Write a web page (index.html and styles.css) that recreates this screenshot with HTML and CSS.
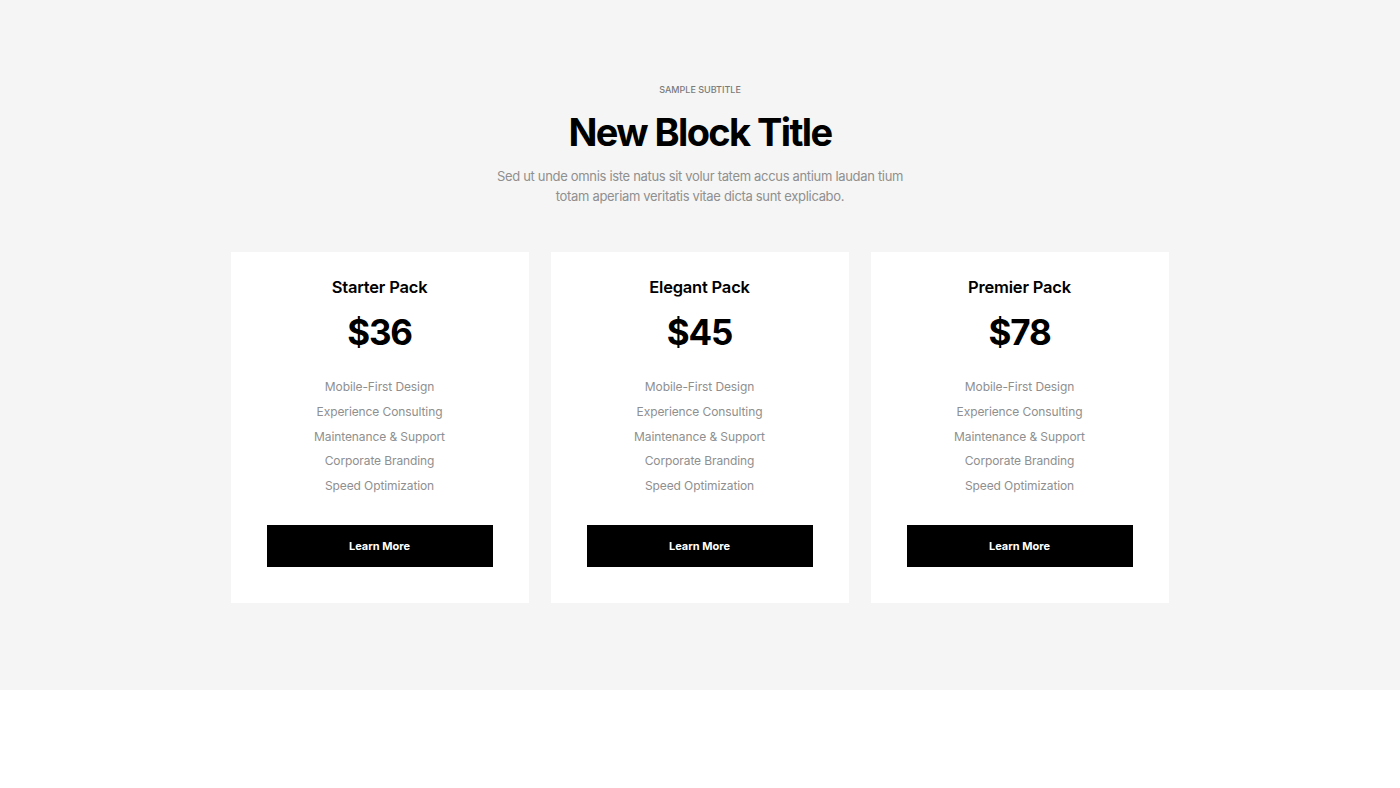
FILE: index.html
```html
<!DOCTYPE html>
<html lang="en">
<head>
<meta charset="utf-8">
<title>Pricing</title>
<link rel="stylesheet" href="styles.css">
</head>
<body>
<section class="pricing">
  <header class="intro">
    <p class="subtitle">SAMPLE SUBTITLE</p>
    <h1 class="title">New Block Title</h1>
    <p class="lead">Sed ut unde omnis iste natus sit volur tatem accus antium laudan tium totam aperiam veritatis vitae dicta sunt explicabo.</p>
  </header>
  <div class="cards">
    <article class="card">
      <h2 class="card-title">Starter Pack</h2>
      <div class="price">$36</div>
      <ul class="features">
        <li>Mobile-First Design</li>
        <li>Experience Consulting</li>
        <li>Maintenance &amp; Support</li>
        <li>Corporate Branding</li>
        <li>Speed Optimization</li>
      </ul>
      <a class="btn" href="#">Learn More</a>
    </article>
    <article class="card">
      <h2 class="card-title">Elegant Pack</h2>
      <div class="price">$45</div>
      <ul class="features">
        <li>Mobile-First Design</li>
        <li>Experience Consulting</li>
        <li>Maintenance &amp; Support</li>
        <li>Corporate Branding</li>
        <li>Speed Optimization</li>
      </ul>
      <a class="btn" href="#">Learn More</a>
    </article>
    <article class="card">
      <h2 class="card-title">Premier Pack</h2>
      <div class="price">$78</div>
      <ul class="features">
        <li>Mobile-First Design</li>
        <li>Experience Consulting</li>
        <li>Maintenance &amp; Support</li>
        <li>Corporate Branding</li>
        <li>Speed Optimization</li>
      </ul>
      <a class="btn" href="#">Learn More</a>
    </article>
  </div>
</section>
</body>
</html>
```
FILE: styles.css
```css
* { box-sizing: border-box; }
html, body { margin: 0; padding: 0; background: #ffffff; }
body { font-family: Inter, "Noto Sans", sans-serif; color: #000; }

.pricing {
  background: #f5f5f5;
  height: 690px;
  padding-top: 84px;
  display: flex;
  flex-direction: column;
  align-items: center;
}

.intro { text-align: center; }
.subtitle {
  margin: 0;
  font-size: 9px;
  line-height: 12px;
  color: #7a7a7a;
  font-weight: 500;
}
.title {
  margin: 12px 0 0;
  font-size: 38px;
  line-height: 48px;
  font-weight: 700;
  letter-spacing: -1.6px;
  color: #000;
}
.lead {
  margin: 10px auto 0;
  width: 420px;
  font-size: 13px;
  line-height: 20px;
  color: #8f8f8f;
  letter-spacing: -0.32px;
}

.cards {
  margin-top: 46px;
  padding-right: 1px;
  display: flex;
  gap: 22px;
}
.card {
  width: 298px;
  height: 351px;
  background: #fff;
  padding: 24px 36px 36px;
  display: flex;
  flex-direction: column;
  align-items: center;
}
.card-title {
  margin: 0;
  font-size: 16.5px;
  line-height: 22px;
  font-weight: 600;
  letter-spacing: -0.2px;
}
.price {
  margin-top: 12px;
  font-size: 35px;
  line-height: 44px;
  font-weight: 700;
  letter-spacing: -1.2px;
}
.features {
  list-style: none;
  margin: 21px 0 0;
  padding: 0;
  text-align: center;
}
.features li {
  font-size: 12px;
  line-height: 24.75px;
  color: #8f8f8f;
  letter-spacing: -0.1px;
}
.btn {
  margin-top: auto;
  width: 226px;
  height: 42px;
  background: #000;
  color: #fff;
  text-decoration: none;
  font-size: 11px;
  font-weight: 700;
  display: flex;
  align-items: center;
  justify-content: center;
}
```
